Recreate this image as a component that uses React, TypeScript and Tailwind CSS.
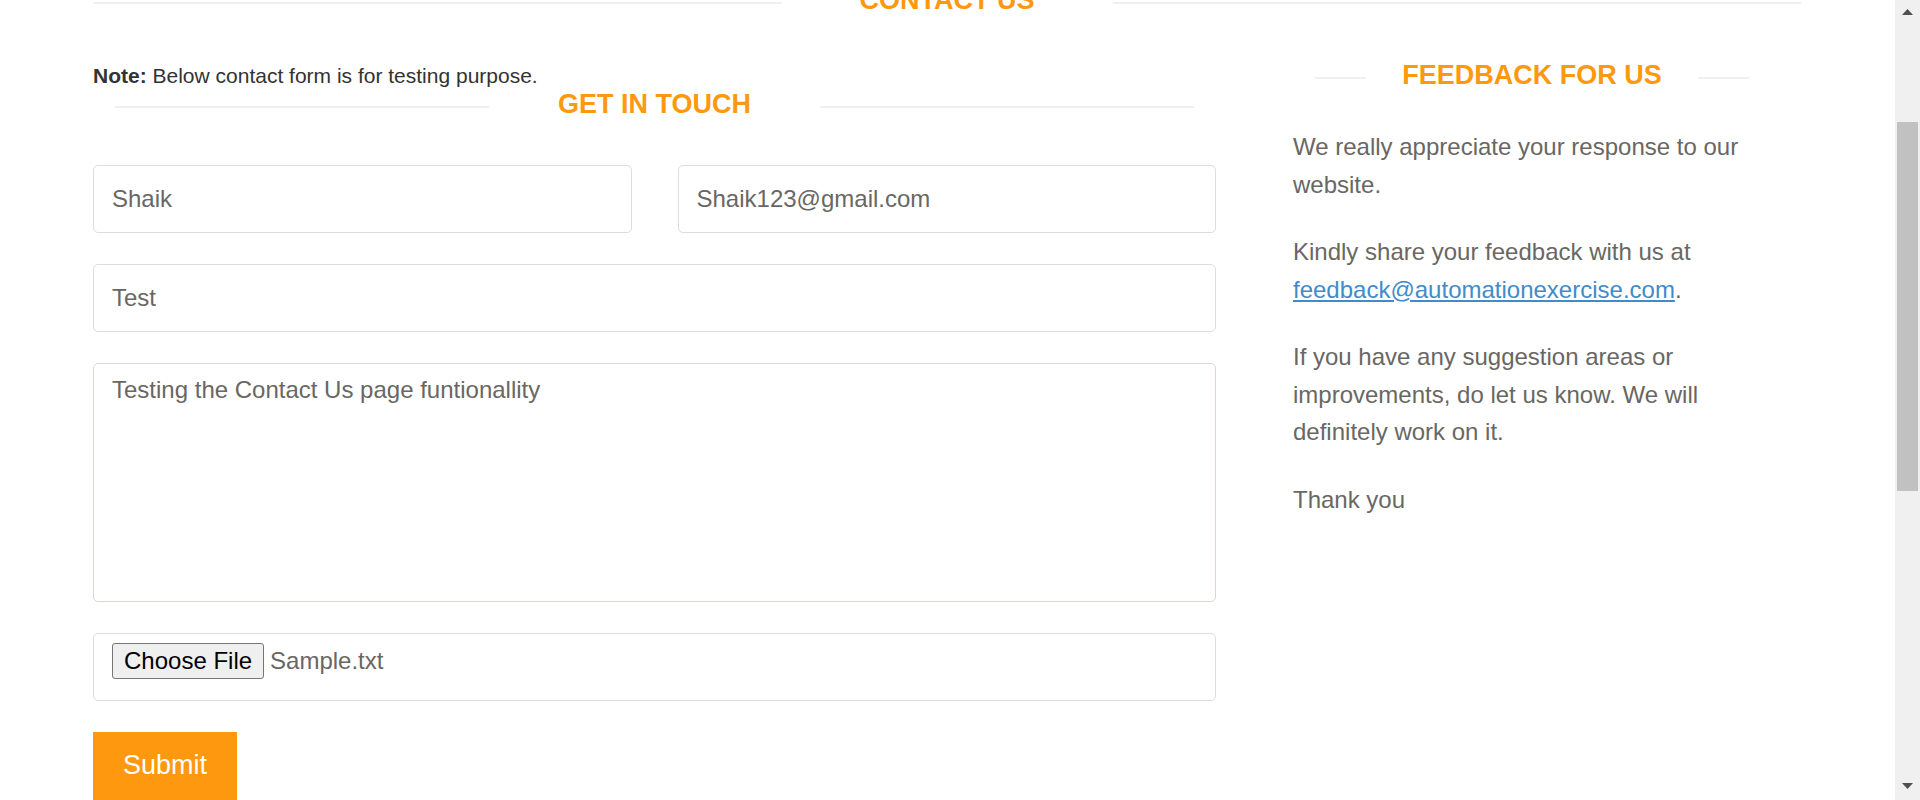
import React from "react";

export default function App() {
  return (
    <div
      className="flex h-[800px] w-[1920px] overflow-hidden bg-white"
      style={{ fontFamily: '"Liberation Sans", Arial, Helvetica, sans-serif' }}
    >
      <main className="flex-1 pl-[93px]">
        {/* CONTACT US title */}
        <div className="flex items-center mt-[-15px] w-[1708px]">
          <div className="flex-1 h-[2px] bg-[#f0f0f0] mt-[6px]" />
          <h2 className="mx-[78px] text-[27px] leading-[30px] font-bold text-[#FE980F] uppercase">
            Contact Us
          </h2>
          <div className="flex-1 h-[2px] bg-[#f0f0f0] mt-[6px]" />
        </div>

        <div className="flex mt-[45px] gap-[77px]">
          {/* Contact form column */}
          <div className="w-[1123px] flex flex-col">
            <p className="mt-[1px] text-[21px] leading-[30px] text-[#333333]">
              <b>Note:</b> Below contact form is for testing purpose.
            </p>
            <div className="flex items-center mx-[22px] mt-[-2px]">
              <div className="flex-1 h-[2px] bg-[#f0f0f0] mt-[6px]" />
              <h2 className="mx-[69px] text-[27px] leading-[30px] font-bold text-[#FE980F] uppercase">
                Get In Touch
              </h2>
              <div className="flex-1 h-[2px] bg-[#f0f0f0] mt-[6px]" />
            </div>

            <form className="mt-[46px] flex flex-col gap-[31px]">
              <div className="grid grid-cols-2 gap-x-[46px]">
                <input
                  readOnly
                  value="Shaik"
                  className="h-[68px] w-full border border-[#dddddd] rounded-[5px] px-[18px] text-[24px] text-[#696763] outline-none"
                />
                <input
                  readOnly
                  value="Shaik123@gmail.com"
                  className="h-[68px] w-full border border-[#dddddd] rounded-[5px] px-[18px] text-[24px] text-[#696763] outline-none"
                />
              </div>
              <input
                readOnly
                value="Test"
                className="h-[68px] w-full border border-[#dddddd] rounded-[5px] px-[18px] text-[24px] text-[#696763] outline-none"
              />
              <textarea
                readOnly
                value="Testing the Contact Us page funtionallity"
                className="h-[239px] w-full resize-none border border-[#dcd8ce] rounded-[5px] px-[18px] pt-[8px] text-[24px] leading-[36px] text-[#696763] outline-none"
              />
              <div className="h-[68px] w-full border border-[#dddddd] rounded-[5px] px-[18px] pt-[9px]">
                <div className="flex items-center h-[36px]">
                  <span className="h-[36px] px-[11px] flex items-center border border-[#767676] bg-[#efefef] rounded-[3px] text-[24px] leading-none text-black">
                    Choose File
                  </span>
                  <span className="ml-[6px] text-[24px] leading-none text-[#696763]">Sample.txt</span>
                </div>
              </div>
              <div>
                <button
                  type="button"
                  className="bg-[#FE980F] text-white text-[27px] leading-[37px] px-[30px] pt-[15px] pb-[20px]"
                >
                  Submit
                </button>
              </div>
            </form>
          </div>

          {/* Feedback column */}
          <div className="w-[478px]">
            <div className="flex items-center px-[22px]">
              <div className="flex-1 h-[2px] bg-[#f0f0f0] mt-[6px]" />
              <h2 className="mx-[36px] text-[27px] leading-[30px] font-bold text-[#FE980F] uppercase">
                Feedback For Us
              </h2>
              <div className="flex-1 h-[2px] bg-[#f0f0f0] mt-[6px]" />
            </div>
            <div className="mt-[38px] text-[24px] leading-[37.5px] text-[#696763]">
              <p className="mb-[30px]">We really appreciate your response to our website.</p>
              <p className="mb-[30px]">
                Kindly share your feedback with us at{" "}
                <a href="#" className="text-[#428bca] underline">
                  feedback@automationexercise.com
                </a>
                .
              </p>
              <p className="mb-[30px]">
                If you have any suggestion areas or improvements, do let us know. We will definitely work on it.
              </p>
              <p>Thank you</p>
            </div>
          </div>
        </div>
      </main>

      {/* Scrollbar */}
      <div className="w-[25px] h-full bg-[#f0f0f0] flex flex-col items-center">
        <svg className="mt-[9px]" width="11" height="6" viewBox="0 0 11 6">
          <polygon points="5.5,0 11,6 0,6" fill="#505050" />
        </svg>
        <div className="mt-[107px] h-[369px] w-[21px] bg-[#c1c1c1]" />
        <div className="flex-1" />
        <svg className="mb-[11px]" width="11" height="6" viewBox="0 0 11 6">
          <polygon points="0,0 11,0 5.5,6" fill="#505050" />
        </svg>
      </div>
    </div>
  );
}
